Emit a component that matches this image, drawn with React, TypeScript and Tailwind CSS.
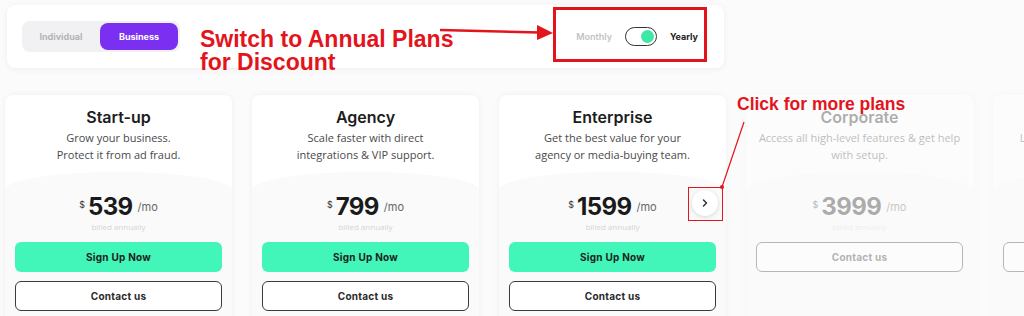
import { ChevronRight } from 'lucide-react'

type Plan = {
  name: string
  lines: string[]
  price: string
  signUp: boolean
  faded?: boolean
}

const PLANS: Plan[] = [
  { name: 'Start-up', lines: ['Grow your business.', 'Protect it from ad fraud.'], price: '539', signUp: true },
  { name: 'Agency', lines: ['Scale faster with direct', 'integrations & VIP support.'], price: '799', signUp: true },
  { name: 'Enterprise', lines: ['Get the best value for your', 'agency or media-buying team.'], price: '1599', signUp: true },
  {
    name: 'Corporate',
    lines: ['Access all high-level features & get help', 'with setup.'],
    price: '3999',
    signUp: false,
    faded: true,
  },
  {
    name: 'Custom',
    lines: ['Let us build a custom plan for you', 'and your whole team.'],
    price: '',
    signUp: false,
    faded: true,
  },
]

const heading = { fontFamily: 'Inter, "Noto Sans", sans-serif' }
const body = { fontFamily: '"Open Sans", "Noto Sans", sans-serif' }
const note = { fontFamily: '"Liberation Sans", Arial, sans-serif' }

function PlanCard({ plan }: { plan: Plan }) {
  return (
    <div
      className={`w-[227px] h-[240px] shrink-0 bg-white rounded-lg shadow-[0_0_6px_rgba(0,0,0,0.05)] pt-[10px] flex flex-col ${
        plan.faded ? 'opacity-35' : ''
      }`}
    >
      <h3 className="text-center text-[16px] leading-[24px] font-semibold text-[#1c1c1c] whitespace-nowrap" style={heading}>
        {plan.name}
      </h3>
      <div className="text-center text-[11px] leading-[17px] text-[#4a4a4a] whitespace-nowrap" style={body}>
        {plan.lines.map((l) => (
          <p key={l}>{l}</p>
        ))}
      </div>
      <div className="mt-[9px] flex-1 bg-[#fafafa] rounded-tl-[50%_18px] rounded-tr-[50%_18px] pt-[21px] px-[10px]">
        <div className="h-[28px] flex items-center justify-center gap-[3px]" style={heading}>
          {plan.price && (
            <>
              <span className="text-[9px] text-[#333] -mt-[4px]">$</span>
              <span className="text-[24px] leading-none font-bold tracking-tight text-[#1a1a1a]">{plan.price}</span>
              <span className="text-[11px] text-[#666] ml-[2px]">/mo</span>
            </>
          )}
        </div>
        <p className="h-[12px] text-center text-[8px] leading-[12px] text-[#d4d4d6]" style={body}>
          {plan.price ? 'billed annually' : ''}
        </p>
        {plan.signUp && (
          <button
            className="mt-[9px] w-full h-[30px] rounded-md bg-[#42f5b8] text-[10px] font-bold text-[#1e1e1e] tracking-wide"
            style={heading}
          >
            Sign Up Now
          </button>
        )}
        <button
          className="mt-[9px] w-full h-[30px] rounded-md bg-white border-[1.5px] border-[#3a3a3a] text-[10px] font-bold text-[#2a2a2a] tracking-wide"
          style={heading}
        >
          Contact us
        </button>
      </div>
    </div>
  )
}

export default function App() {
  return (
    <div className="relative w-[1024px] h-[316px] overflow-hidden bg-[#fbfbfb]">
      {/* top switcher panel */}
      <div className="ml-[7px] mt-[5px] w-[717px] h-[63px] bg-white rounded-lg shadow-[0_1px_6px_rgba(0,0,0,0.06)] flex items-center justify-between pl-[15px] pr-[26px]">
        <div className="flex items-center h-[31px] w-[158px] rounded-lg bg-[#f1f1f3] p-[2px] pl-0" style={heading}>
          <span className="w-[79px] text-center text-[9px] font-bold text-[#b4b4b8]">Individual</span>
          <span className="w-[79px] h-[27px] flex items-center justify-center rounded-lg bg-[#7b2ff1] text-[9px] font-bold text-white">
            Business
          </span>
        </div>
        <div className="flex items-center gap-[13px]" style={heading}>
          <span className="text-[9px] font-semibold text-[#c2c2c4]">Monthly</span>
          <span className="w-[32px] h-[19px] rounded-full border-[1.5px] border-[#333] bg-white flex items-center justify-end pr-[2px]">
            <span className="w-[13px] h-[13px] rounded-full bg-[#3de8a7]" />
          </span>
          <span className="text-[9px] font-bold text-[#222]">Yearly</span>
        </div>
      </div>

      {/* plan cards */}
      <div className="mt-[27px] ml-[5px] flex gap-[20px]">
        {PLANS.map((p) => (
          <PlanCard key={p.name} plan={p} />
        ))}
      </div>

      {/* carousel next */}
      <button className="absolute left-[692px] top-[190px] w-[26px] h-[26px] rounded-full bg-white shadow-[0_1px_4px_rgba(0,0,0,0.15)] flex items-center justify-center">
        <ChevronRight size={12} strokeWidth={3} className="text-[#333]" />
      </button>

      {/* annotations */}
      <div className="absolute left-[200px] top-[28px] text-[23px] leading-[23px] font-bold text-[#e3141b]" style={note}>
        <p>Switch to Annual Plans</p>
        <p>for Discount</p>
      </div>
      <div className="absolute left-[553px] top-[7px] w-[154px] h-[55px] border-[3px] border-[#e3141b]" />
      <svg className="absolute left-0 top-0" width="1024" height="316">
        <line x1="440" y1="30" x2="540" y2="32.5" stroke="#e3141b" strokeWidth="2.5" />
        <polygon points="537,25 553,33 537,40" fill="#e3141b" />
        <line x1="744" y1="122" x2="722" y2="187" stroke="#e3141b" strokeWidth="1.2" />
        <circle cx="722" cy="187" r="2" fill="#e3141b" />
      </svg>
      <div className="absolute left-[688px] top-[187px] w-[35px] h-[34px] border border-[#e3141b]" />
      <p className="absolute left-[737px] top-[94px] text-[17.5px] leading-[20px] font-bold text-[#e3141b]" style={note}>
        Click for more plans
      </p>
    </div>
  )
}
